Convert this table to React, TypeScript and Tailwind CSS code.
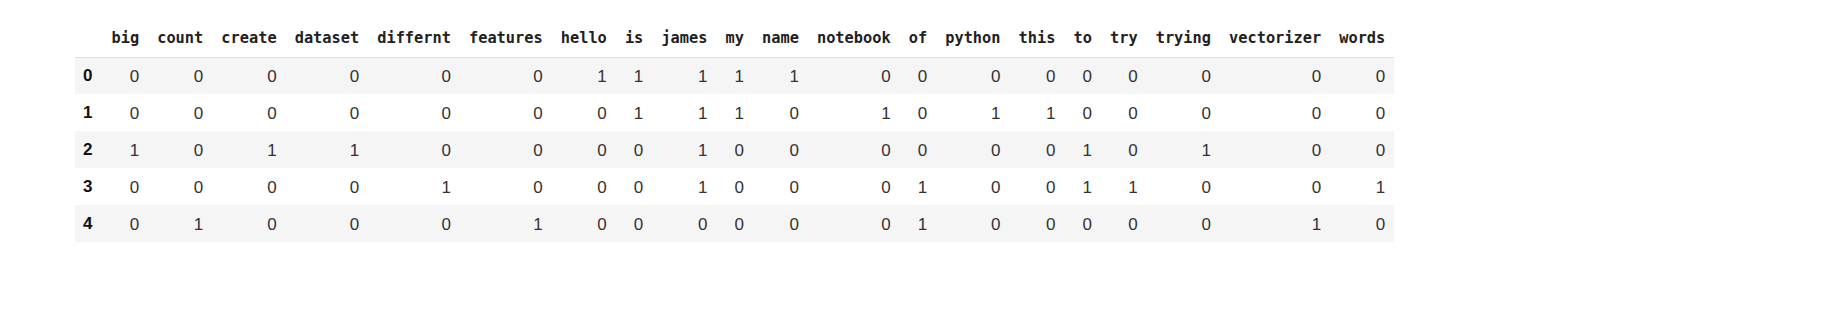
const columns = [
  "big",
  "count",
  "create",
  "dataset",
  "differnt",
  "features",
  "hello",
  "is",
  "james",
  "my",
  "name",
  "notebook",
  "of",
  "python",
  "this",
  "to",
  "try",
  "trying",
  "vectorizer",
  "words",
];

const rows = [
  [0, 0, 0, 0, 0, 0, 1, 1, 1, 1, 1, 0, 0, 0, 0, 0, 0, 0, 0, 0],
  [0, 0, 0, 0, 0, 0, 0, 1, 1, 1, 0, 1, 0, 1, 1, 0, 0, 0, 0, 0],
  [1, 0, 1, 1, 0, 0, 0, 0, 1, 0, 0, 0, 0, 0, 0, 1, 0, 1, 0, 0],
  [0, 0, 0, 0, 1, 0, 0, 0, 1, 0, 0, 0, 1, 0, 0, 1, 1, 0, 0, 1],
  [0, 1, 0, 0, 0, 1, 0, 0, 0, 0, 0, 0, 1, 0, 0, 0, 0, 0, 1, 0],
];

export default function App() {
  return (
    <div className="h-[316px] w-[1838px] bg-white pl-[75px] pt-[20px]">
      <table className="border-collapse">
        <thead>
          <tr className="h-[37px] border-b border-[#e0e0e0]">
            <th className="pl-[8px] pr-[10px]" />
            {columns.map((c) => (
              <th
                key={c}
                className="pl-[9px] pr-[9.08px] text-right align-middle font-['DejaVu_Sans_Mono',monospace] text-[15.3px] font-bold text-[#212121]"
              >
                {c}
              </th>
            ))}
          </tr>
        </thead>
        <tbody>
          {rows.map((r, i) => (
            <tr key={i} className={i % 2 === 0 ? "h-[37px] bg-[#f5f5f5]" : "h-[37px] bg-white"}>
              <th className="pl-[8px] pr-[10px] text-left align-middle font-['Liberation_Sans',sans-serif] text-[17px] font-bold text-[#111]">
                {i}
              </th>
              {r.map((v, j) => (
                <td
                  key={j}
                  className="pl-[9px] pr-[9.08px] pt-[2px] text-right align-middle font-['Liberation_Sans',sans-serif] text-[17px] text-[#333]"
                >
                  {v}
                </td>
              ))}
            </tr>
          ))}
        </tbody>
      </table>
    </div>
  );
}
